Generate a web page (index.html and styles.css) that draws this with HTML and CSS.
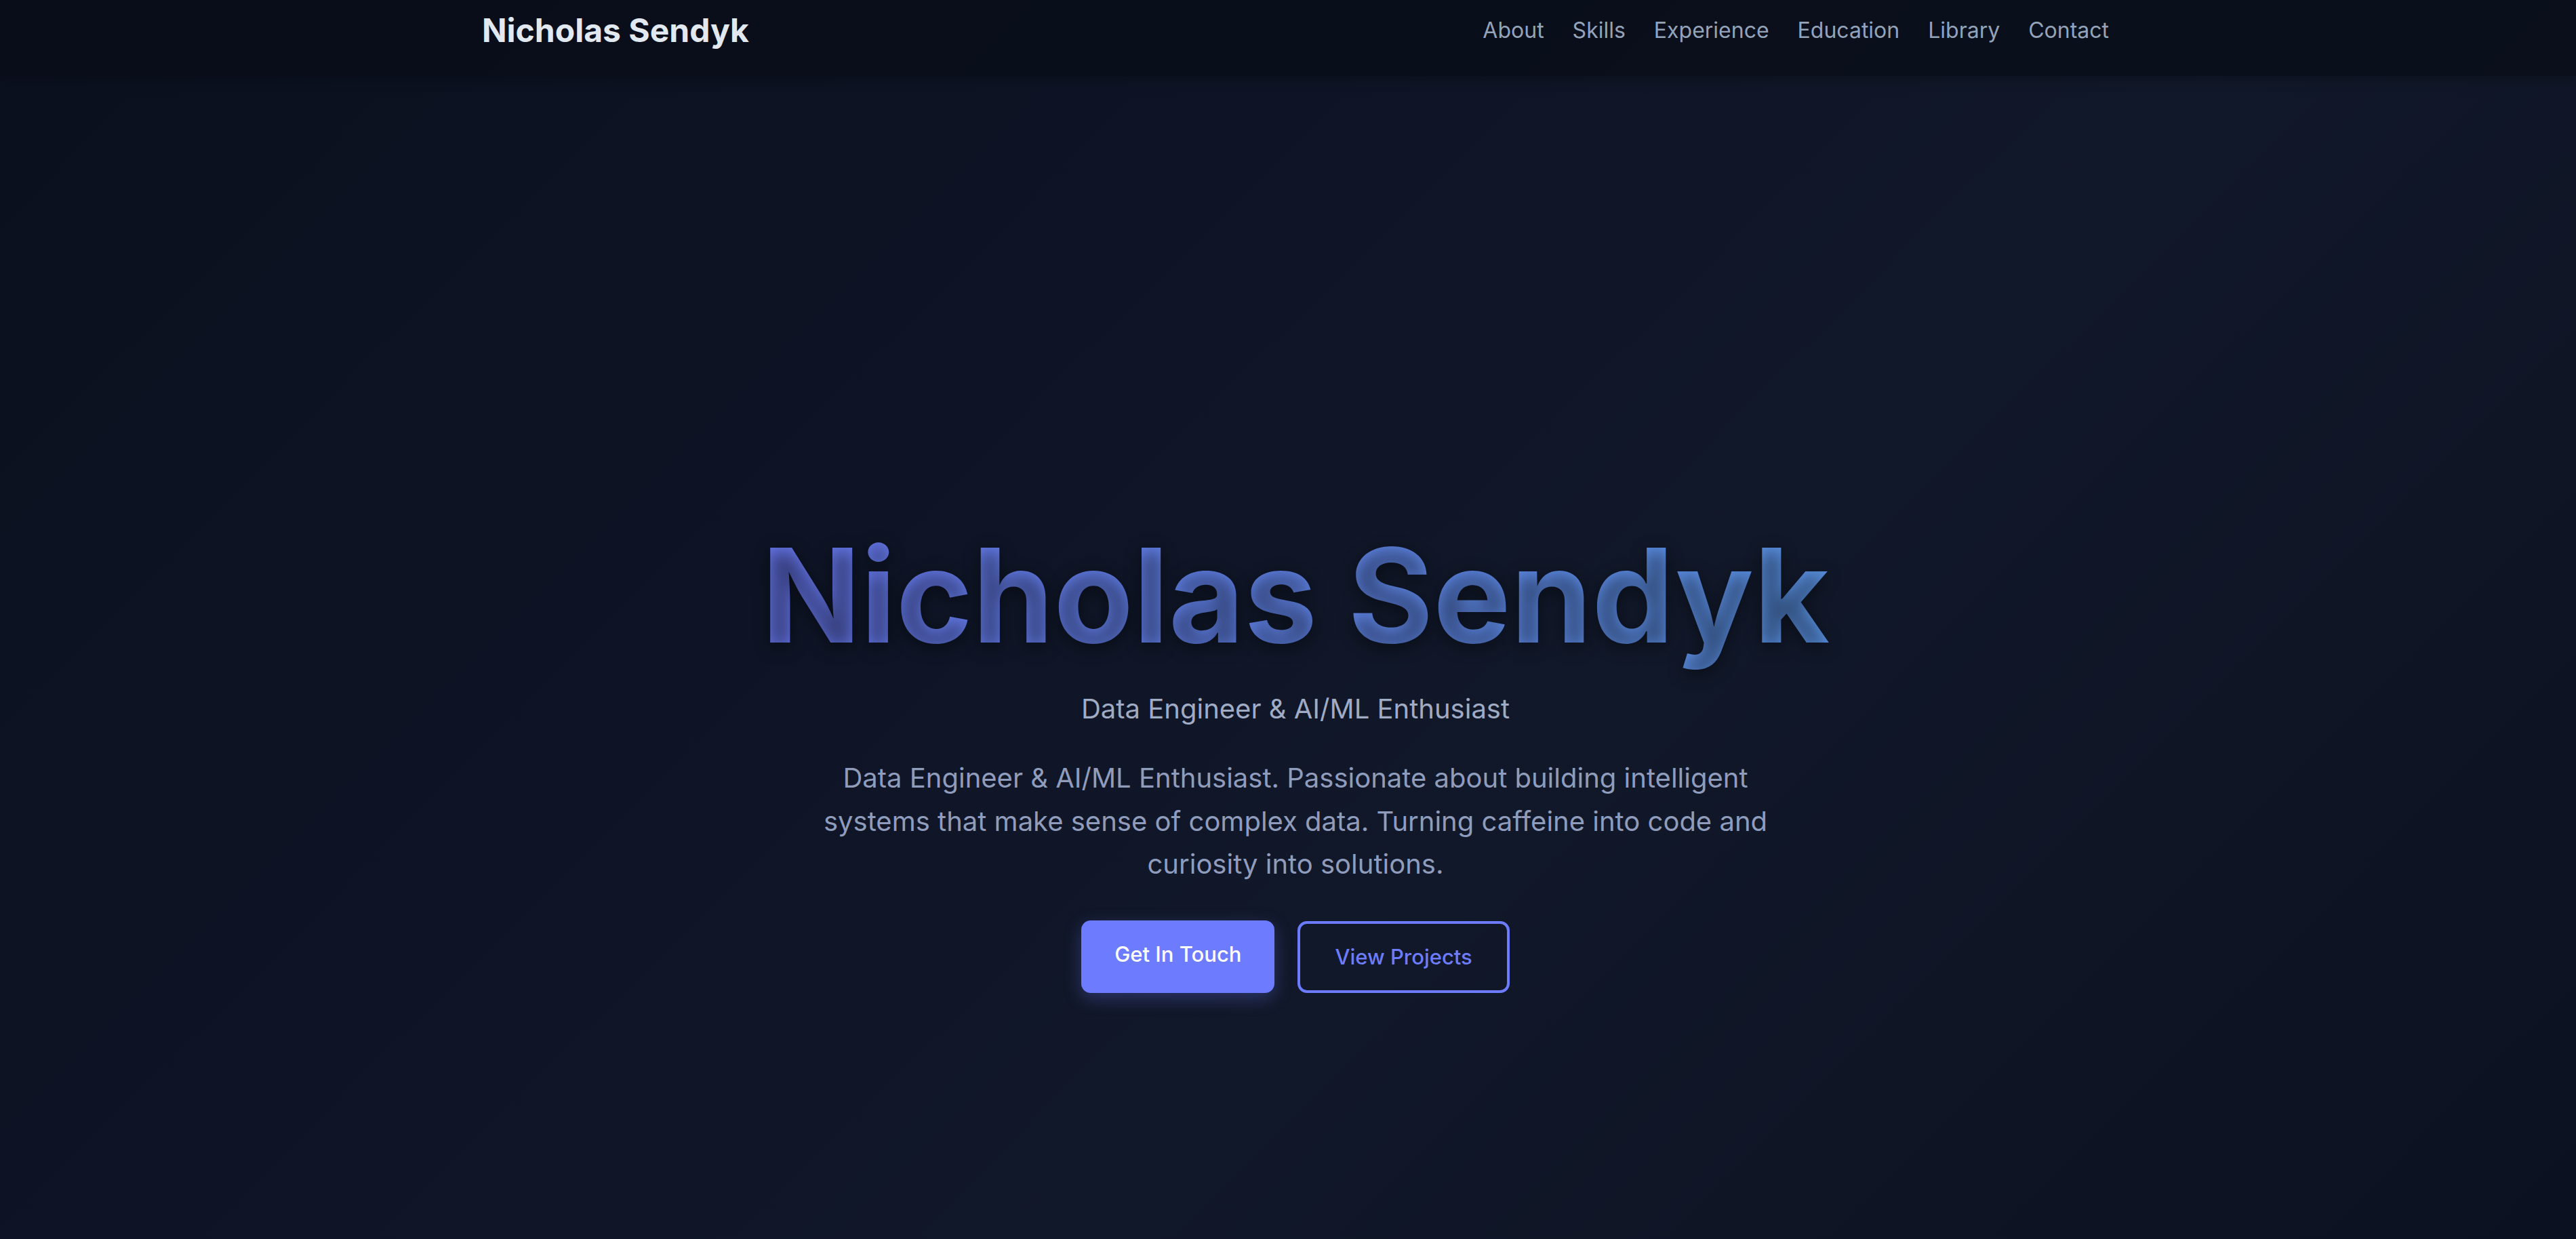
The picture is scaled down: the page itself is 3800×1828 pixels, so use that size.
FILE: index.html
```html
<!DOCTYPE html>
<html lang="en">
<head>
<meta charset="utf-8">
<title>Nicholas Sendyk</title>
<link rel="stylesheet" href="styles.css">
</head>
<body>
  <header class="nav">
    <div class="nav-inner">
      <a class="logo" href="#">Nicholas Sendyk</a>
      <nav class="links">
        <a href="#about">About</a>
        <a href="#skills">Skills</a>
        <a href="#experience">Experience</a>
        <a href="#education">Education</a>
        <a href="#library">Library</a>
        <a href="#contact">Contact</a>
      </nav>
    </div>
  </header>
  <main class="hero">
    <h1 class="hero-title">Nicholas Sendyk</h1>
    <p class="hero-subtitle">Data Engineer &amp; AI/ML Enthusiast</p>
    <p class="hero-text">Data Engineer &amp; AI/ML Enthusiast. Passionate about building intelligent systems that make sense of complex data. Turning caffeine into code and curiosity into solutions.</p>
    <div class="actions">
      <a class="btn btn-primary" href="#contact">Get In Touch</a>
      <a class="btn btn-outline" href="#projects">View Projects</a>
    </div>
  </main>
</body>
</html>
```

FILE: styles.css
```css
* { box-sizing: border-box; }

html, body {
  margin: 0;
  padding: 0;
}

body {
  font-family: "Inter", "Noto Sans", "Liberation Sans", sans-serif;
  background: linear-gradient(135deg, #0b101e 0%, #0e1425 35%, #111829 60%, #0b1120 100%);
  color: #e2e8f0;
  min-height: 1828px;
  overflow: hidden;
}

a { text-decoration: none; }

.nav {
  height: 112px;
  padding: 0 0 22px 22px;
  background: rgba(8, 12, 24, 0.72);
  box-shadow: 0 4px 18px rgba(0, 0, 0, 0.25);
  display: flex;
  align-items: center;
}

.nav-inner {
  width: 2400px;
  margin: 0 auto;
  display: flex;
  align-items: center;
  justify-content: space-between;
}

.logo {
  font-size: 48px;
  font-weight: 700;
  color: #e2e8f0;
  line-height: 1.2;
}

.links {
  display: flex;
  gap: 42px;
}

.links a {
  font-size: 32px;
  color: #94a3b8;
  line-height: 1.2;
}

.hero {
  padding: 651px 0 0 22px;
  display: flex;
  flex-direction: column;
  align-items: center;
  text-align: center;
}

.hero-title {
  margin: 0;
  font-size: 192px;
  font-weight: 700;
  line-height: 1.2;
  background: linear-gradient(90deg, #6675ea 0%, #5f86e6 60%, #5a93e4 100%);
  -webkit-background-clip: text;
  background-clip: text;
  -webkit-text-fill-color: transparent;
  text-shadow: 0 6px 24px rgba(0, 0, 0, 0.45);
}

.hero-subtitle {
  margin: 24px 0 0;
  font-size: 40px;
  line-height: 57.6px;
  color: #a0abc4;
}

.hero-text {
  margin: 41.5px 0 0;
  max-width: 1440px;
  font-size: 40px;
  line-height: 63.5px;
  color: #8f9cbc;
}

.actions {
  margin-top: 51px;
  display: flex;
  gap: 34px;
  align-items: flex-start;
}

.btn {
  display: block;
  font-size: 31px;
  font-weight: 500;
  line-height: 36px;
  border-radius: 14px;
}

.btn-primary {
  background: #6d7cff;
  color: #ffffff;
  padding: 32px 49px 39px;
  box-shadow: 0 8px 26px rgba(109, 124, 255, 0.3);
}

.btn-outline {
  border: 4px solid #6d7cff;
  color: #6d7cff;
  padding: 31px 51px;
  margin-top: 1px;
}
```
